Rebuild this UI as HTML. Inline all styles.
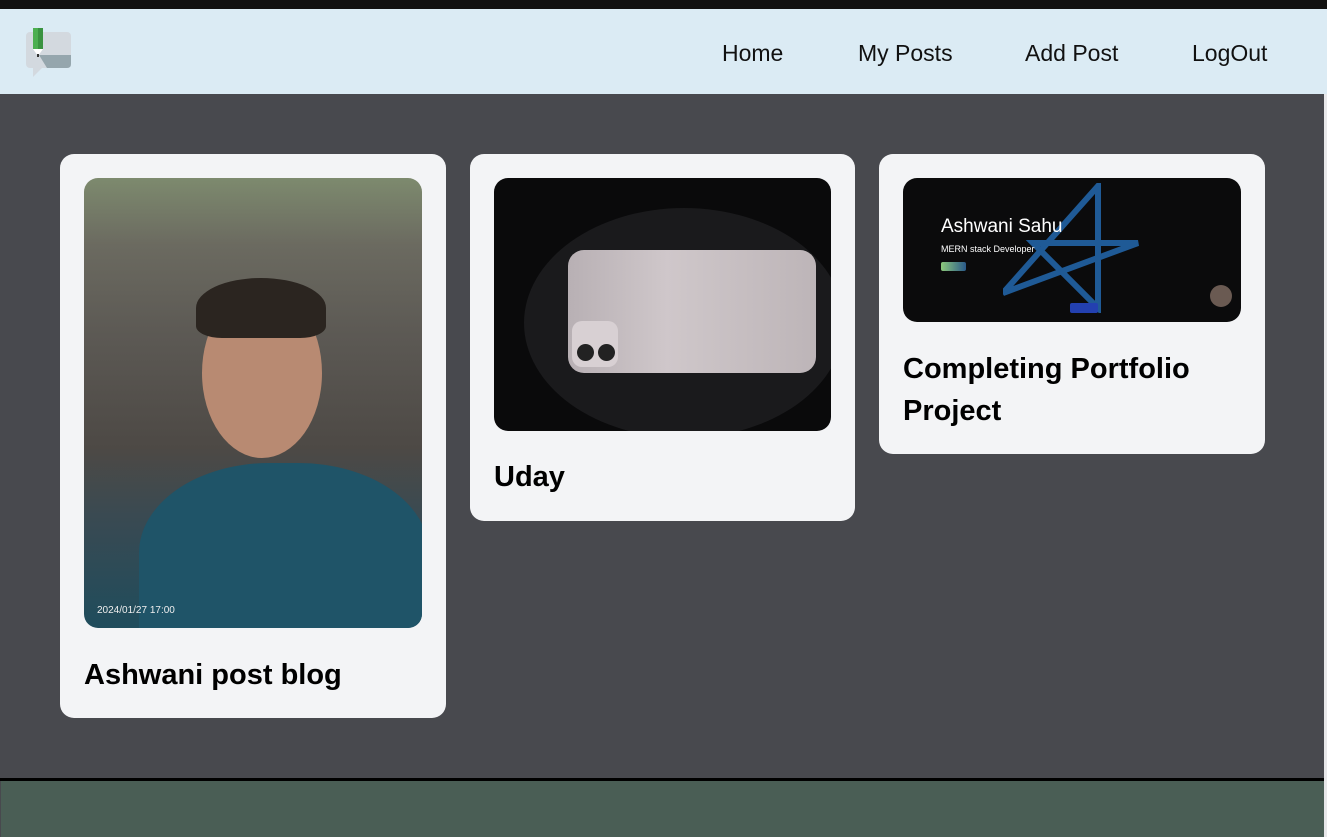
<!DOCTYPE html>
<html><head><meta charset="utf-8"><style>
*{margin:0;padding:0;box-sizing:border-box}
body{width:1327px;height:837px;overflow:hidden;background:#48494e;font-family:"Liberation Sans","DejaVu Sans",sans-serif;position:relative}
.top{position:absolute;left:0;top:0;width:1327px;height:9px;background:#111}
.nav{position:absolute;left:0;top:9px;width:1327px;height:85px;background:#dbebf4}
.nav a{position:absolute;top:31px;font-size:23px;color:#111;text-decoration:none}
.main{position:absolute;left:0;top:94px;width:1324px;height:684px;background:#48494e}
.line{position:absolute;left:0;top:778px;width:1324px;height:3px;background:#000}
.foot{position:absolute;left:1px;top:781px;width:1323px;height:56px;background:#4a5e55}
.edge{position:absolute;left:1324px;top:94px;width:3px;height:743px;background:#e8e8ea}
.card{position:absolute;background:#f3f4f6;border-radius:14px}
.img{position:absolute;left:24px;top:24px;border-radius:14px;overflow:hidden}
.t{position:absolute;left:24px;font-size:29px;font-weight:bold;color:#000;line-height:42px}
</style></head><body>
<div class="top"></div>
<div class="nav">
<svg style="position:absolute;left:25px;top:18px" width="48" height="60" viewBox="0 0 48 60">
<rect x="1" y="5" width="45" height="36" rx="4" fill="#d3d9df"/>
<path d="M14 28 L46 28 L46 37 Q46 41 42 41 L22 41 Z" fill="#95a6ad"/>
<path d="M8 41 L8 50 L17 41 Z" fill="#d3d9df"/>
<rect x="8" y="1" width="10" height="21" fill="#4caf50"/>
<rect x="13" y="1" width="5" height="21" fill="#3a9340"/>
<path d="M8 22 L18 22 L13 29 Z" fill="#fff"/>
<rect x="12" y="27" width="2" height="3" fill="#333"/>
</svg>
<a style="left:722px">Home</a>
<a style="left:858px">My Posts</a>
<a style="left:1025px">Add Post</a>
<a style="left:1192px">LogOut</a>
</div>
<div class="main"></div>
<div class="line"></div>
<div class="foot"></div>
<div class="edge"></div>

<div class="card" style="left:60px;top:154px;width:386px;height:564px">
<div class="img" style="width:338px;height:450px;background:linear-gradient(180deg,#7d8a6e 0%,#6b6a60 15%,#5c5954 35%,#4d4945 60%,#3a4a52 75%,#1f4c5c 100%)">
<div style="position:absolute;left:118px;top:110px;width:120px;height:170px;border-radius:50%;background:#b88a72"></div>
<div style="position:absolute;left:112px;top:100px;width:130px;height:60px;border-radius:50% 50% 20% 20%;background:#2b2520"></div>
<div style="position:absolute;left:55px;top:285px;width:290px;height:200px;border-radius:45% 45% 0 0;background:#1f5468"></div>
<div style="position:absolute;left:13px;top:427px;font-size:10px;color:#eee">2024/01/27 17:00</div>
</div>
<div class="t" style="top:500px">Ashwani post blog</div>
</div>

<div class="card" style="left:470px;top:154px;width:385px;height:367px">
<div class="img" style="width:337px;height:253px;background:#0a0a0b">
<div style="position:absolute;left:30px;top:30px;width:320px;height:230px;border-radius:50%;background:#1a1a1c"></div>
<div style="position:absolute;left:74px;top:72px;width:248px;height:123px;border-radius:16px;background:linear-gradient(90deg,#b8b0b4,#cfc7ca 40%,#bdb5b8)"></div>
<div style="position:absolute;left:78px;top:143px;width:46px;height:46px;border-radius:10px;background:#d8d0d3"></div>
<div style="position:absolute;left:83px;top:166px;width:17px;height:17px;border-radius:50%;background:#222"></div>
<div style="position:absolute;left:104px;top:166px;width:17px;height:17px;border-radius:50%;background:#222"></div>
</div>
<div class="t" style="top:302px">Uday</div>
</div>

<div class="card" style="left:879px;top:154px;width:386px;height:300px">
<div class="img" style="width:338px;height:144px;background:#0b0b0c">
<svg style="position:absolute;left:100px;top:5px" width="140" height="130" viewBox="0 0 140 130"><path d="M95 3 L95 125 L30 60 L135 60 L0 110 Z" fill="none" stroke="#1f5a96" stroke-width="6"/></svg>
<div style="position:absolute;left:38px;top:38px;font-size:19px;color:#fff">Ashwani Sahu</div>
<div style="position:absolute;left:38px;top:66px;font-size:9px;color:#fff">MERN stack Developer</div>
<div style="position:absolute;left:38px;top:84px;width:25px;height:9px;background:linear-gradient(90deg,#8cc87a,#2a5a8a);border-radius:2px"></div>
<div style="position:absolute;left:167px;top:125px;width:28px;height:10px;background:#2340b0;border-radius:2px"></div>
<div style="position:absolute;left:307px;top:107px;width:22px;height:22px;border-radius:50%;background:#6a5a52"></div>
</div>
<div class="t" style="top:194px">Completing Portfolio<br>Project</div>
</div>
</body></html>
